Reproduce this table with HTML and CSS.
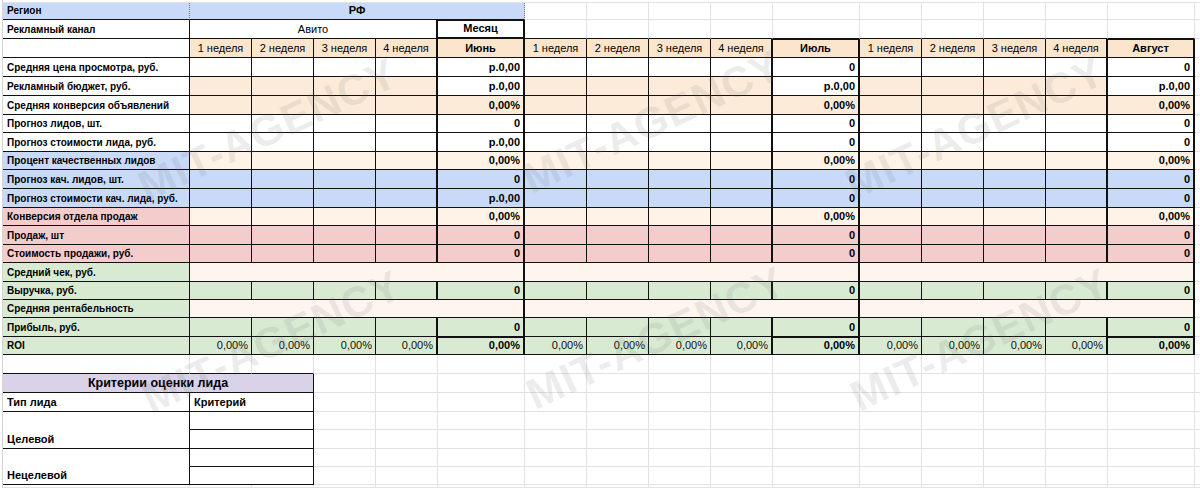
FILE: index.html
```html
<!DOCTYPE html>
<html lang="ru">
<head>
<meta charset="utf-8">
<title>Медиаплан</title>
<link rel="stylesheet" href="styles.css">
</head>
<body>
<div class="page">
  <div class="sheet">
    <div class="top"></div>

    <div class="row">
      <div class="c lab bl dot">Регион</div>
      <div class="c bl b ctr dot sp5">РФ</div>
      <div class="g"></div><div class="g"></div><div class="g"></div><div class="g"></div><div class="g"></div><div class="g"></div><div class="g"></div><div class="g"></div><div class="g"></div><div class="g"></div><div class="g"></div>
    </div>

    <div class="row">
      <div class="c lab">Рекламный канал</div>
      <div class="c ctr sp4 w4">Авито</div>
      <div class="c m ctr mhead">Месяц</div>
      <div class="gk"></div><div class="gk"></div><div class="gk"></div><div class="gk"></div><div class="gk"></div><div class="gk"></div><div class="gk"></div><div class="gk"></div><div class="gk"></div><div class="gk"></div><div class="g"></div>
    </div>

    <div class="row hdr">
      <div class="c"></div>
      <div class="c wk ctr">1 неделя</div><div class="c wk ctr">2 неделя</div><div class="c wk ctr">3 неделя</div><div class="c wk ctr w4">4 неделя</div><div class="c m ctr">Июнь</div>
      <div class="c wk ctr">1 неделя</div><div class="c wk ctr">2 неделя</div><div class="c wk ctr">3 неделя</div><div class="c wk ctr w4">4 неделя</div><div class="c m ctr mtop">Июль</div>
      <div class="c wk ctr">1 неделя</div><div class="c wk ctr">2 неделя</div><div class="c wk ctr">3 неделя</div><div class="c wk ctr w4">4 неделя</div><div class="c m ctr mtop">Август</div>
      <div class="g"></div>
    </div>

    <div class="row">
      <div class="c lab">Средняя цена просмотра, руб.</div>
      <div class="c wk"></div><div class="c wk"></div><div class="c wk"></div><div class="c wk w4"></div><div class="c m">р.0,00</div>
      <div class="c wk"></div><div class="c wk"></div><div class="c wk"></div><div class="c wk w4"></div><div class="c m">0</div>
      <div class="c wk"></div><div class="c wk"></div><div class="c wk"></div><div class="c wk w4"></div><div class="c m">0</div>
      <div class="g"></div>
    </div>

    <div class="row r-budget">
      <div class="c lab">Рекламный бюджет, руб.</div>
      <div class="c wk"></div><div class="c wk"></div><div class="c wk"></div><div class="c wk w4"></div><div class="c m">р.0,00</div>
      <div class="c wk"></div><div class="c wk"></div><div class="c wk"></div><div class="c wk w4"></div><div class="c m">р.0,00</div>
      <div class="c wk"></div><div class="c wk"></div><div class="c wk"></div><div class="c wk w4"></div><div class="c m">р.0,00</div>
      <div class="g"></div>
    </div>

    <div class="row r-conv">
      <div class="c lab">Средняя конверсия объявлений</div>
      <div class="c wk"></div><div class="c wk"></div><div class="c wk"></div><div class="c wk w4"></div><div class="c m nb">0,00%</div>
      <div class="c wk"></div><div class="c wk"></div><div class="c wk"></div><div class="c wk w4"></div><div class="c m nb">0,00%</div>
      <div class="c wk"></div><div class="c wk"></div><div class="c wk"></div><div class="c wk w4"></div><div class="c m nb">0,00%</div>
      <div class="g"></div>
    </div>

    <div class="row">
      <div class="c lab">Прогноз лидов, шт.</div>
      <div class="c wk"></div><div class="c wk"></div><div class="c wk"></div><div class="c wk w4"></div><div class="c m">0</div>
      <div class="c wk"></div><div class="c wk"></div><div class="c wk"></div><div class="c wk w4"></div><div class="c m">0</div>
      <div class="c wk"></div><div class="c wk"></div><div class="c wk"></div><div class="c wk w4"></div><div class="c m">0</div>
      <div class="g"></div>
    </div>

    <div class="row">
      <div class="c lab">Прогноз стоимости лида, руб.</div>
      <div class="c wk"></div><div class="c wk"></div><div class="c wk"></div><div class="c wk w4"></div><div class="c m">р.0,00</div>
      <div class="c wk"></div><div class="c wk"></div><div class="c wk"></div><div class="c wk w4"></div><div class="c m">0</div>
      <div class="c wk"></div><div class="c wk"></div><div class="c wk"></div><div class="c wk w4"></div><div class="c m">0</div>
      <div class="g"></div>
    </div>

    <div class="row r-qual">
      <div class="c lab">Процент качественных лидов</div>
      <div class="c wk"></div><div class="c wk"></div><div class="c wk"></div><div class="c wk w4"></div><div class="c m">0,00%</div>
      <div class="c wk"></div><div class="c wk"></div><div class="c wk"></div><div class="c wk w4"></div><div class="c m">0,00%</div>
      <div class="c wk"></div><div class="c wk"></div><div class="c wk"></div><div class="c wk w4"></div><div class="c m">0,00%</div>
      <div class="g"></div>
    </div>

    <div class="row r-blue">
      <div class="c lab">Прогноз кач. лидов, шт.</div>
      <div class="c wk"></div><div class="c wk"></div><div class="c wk"></div><div class="c wk w4"></div><div class="c m">0</div>
      <div class="c wk"></div><div class="c wk"></div><div class="c wk"></div><div class="c wk w4"></div><div class="c m">0</div>
      <div class="c wk"></div><div class="c wk"></div><div class="c wk"></div><div class="c wk w4"></div><div class="c m">0</div>
      <div class="g"></div>
    </div>

    <div class="row r-blue">
      <div class="c lab">Прогноз стоимости кач. лида, руб.</div>
      <div class="c wk"></div><div class="c wk"></div><div class="c wk"></div><div class="c wk w4"></div><div class="c m">р.0,00</div>
      <div class="c wk"></div><div class="c wk"></div><div class="c wk"></div><div class="c wk w4"></div><div class="c m">0</div>
      <div class="c wk"></div><div class="c wk"></div><div class="c wk"></div><div class="c wk w4"></div><div class="c m">0</div>
      <div class="g"></div>
    </div>

    <div class="row r-sconv">
      <div class="c lab">Конверсия отдела продаж</div>
      <div class="c wk"></div><div class="c wk"></div><div class="c wk"></div><div class="c wk w4"></div><div class="c m">0,00%</div>
      <div class="c wk"></div><div class="c wk"></div><div class="c wk"></div><div class="c wk w4"></div><div class="c m">0,00%</div>
      <div class="c wk"></div><div class="c wk"></div><div class="c wk"></div><div class="c wk w4"></div><div class="c m">0,00%</div>
      <div class="g"></div>
    </div>

    <div class="row r-pink">
      <div class="c lab">Продаж, шт</div>
      <div class="c wk"></div><div class="c wk"></div><div class="c wk"></div><div class="c wk w4"></div><div class="c m">0</div>
      <div class="c wk"></div><div class="c wk"></div><div class="c wk"></div><div class="c wk w4"></div><div class="c m">0</div>
      <div class="c wk"></div><div class="c wk"></div><div class="c wk"></div><div class="c wk w4"></div><div class="c m">0</div>
      <div class="g"></div>
    </div>

    <div class="row r-pink">
      <div class="c lab">Стоимость продажи, руб.</div>
      <div class="c wk"></div><div class="c wk"></div><div class="c wk"></div><div class="c wk w4"></div><div class="c m">0</div>
      <div class="c wk"></div><div class="c wk"></div><div class="c wk"></div><div class="c wk w4"></div><div class="c m">0</div>
      <div class="c wk"></div><div class="c wk"></div><div class="c wk"></div><div class="c wk w4"></div><div class="c m">0</div>
      <div class="g"></div>
    </div>

    <div class="row r-merge">
      <div class="c lab">Средний чек, руб.</div>
      <div class="c mg sp5"></div><div class="c mg sp5"></div><div class="c mg sp5"></div>
      <div class="g"></div>
    </div>

    <div class="row r-green">
      <div class="c lab">Выручка, руб.</div>
      <div class="c wk"></div><div class="c wk"></div><div class="c wk"></div><div class="c wk w4"></div><div class="c m">0</div>
      <div class="c wk"></div><div class="c wk"></div><div class="c wk"></div><div class="c wk w4"></div><div class="c m">0</div>
      <div class="c wk"></div><div class="c wk"></div><div class="c wk"></div><div class="c wk w4"></div><div class="c m">0</div>
      <div class="g"></div>
    </div>

    <div class="row r-merge">
      <div class="c lab">Средняя рентабельность</div>
      <div class="c mg sp5"></div><div class="c mg sp5"></div><div class="c mg sp5"></div>
      <div class="g"></div>
    </div>

    <div class="row r-green">
      <div class="c lab">Прибыль, руб.</div>
      <div class="c wk"></div><div class="c wk"></div><div class="c wk"></div><div class="c wk w4"></div><div class="c m">0</div>
      <div class="c wk"></div><div class="c wk"></div><div class="c wk"></div><div class="c wk w4"></div><div class="c m">0</div>
      <div class="c wk"></div><div class="c wk"></div><div class="c wk"></div><div class="c wk w4"></div><div class="c m">0</div>
      <div class="g"></div>
    </div>

    <div class="row r-green r-roi">
      <div class="c lab">ROI</div>
      <div class="c wk num">0,00%</div><div class="c wk num">0,00%</div><div class="c wk num">0,00%</div><div class="c wk num w4">0,00%</div><div class="c m">0,00%</div>
      <div class="c wk num">0,00%</div><div class="c wk num">0,00%</div><div class="c wk num">0,00%</div><div class="c wk num w4">0,00%</div><div class="c m">0,00%</div>
      <div class="c wk num">0,00%</div><div class="c wk num">0,00%</div><div class="c wk num">0,00%</div><div class="c wk num w4">0,00%</div><div class="c m">0,00%</div>
      <div class="g"></div>
    </div>

    <!-- empty row -->
    <div class="row">
      <div class="gk"></div><div class="gk"></div><div class="gk"></div>
      <div class="g"></div><div class="g"></div><div class="g"></div><div class="g"></div><div class="g"></div><div class="g"></div><div class="g"></div><div class="g"></div><div class="g"></div><div class="g"></div><div class="g"></div><div class="g"></div><div class="g"></div><div class="g"></div>
    </div>

    <!-- criteria table -->
    <div class="row">
      <div class="c crit-h sp3">Критерии оценки лида</div>
      <div class="g"></div><div class="g"></div><div class="g"></div><div class="g"></div><div class="g"></div><div class="g"></div><div class="g"></div><div class="g"></div><div class="g"></div><div class="g"></div><div class="g"></div><div class="g"></div><div class="g"></div><div class="g"></div>
    </div>
    <div class="row">
      <div class="c cl">Тип лида</div>
      <div class="c cl sp2">Критерий</div>
      <div class="g"></div><div class="g"></div><div class="g"></div><div class="g"></div><div class="g"></div><div class="g"></div><div class="g"></div><div class="g"></div><div class="g"></div><div class="g"></div><div class="g"></div><div class="g"></div><div class="g"></div><div class="g"></div>
    </div>
    <div class="row">
      <div class="c cl rs2">Целевой</div>
      <div class="c sp2"></div>
      <div class="g"></div><div class="g"></div><div class="g"></div><div class="g"></div><div class="g"></div><div class="g"></div><div class="g"></div><div class="g"></div><div class="g"></div><div class="g"></div><div class="g"></div><div class="g"></div><div class="g"></div><div class="g"></div>
    </div>
    <div class="row">
      <div class="c sp2"></div>
      <div class="g"></div><div class="g"></div><div class="g"></div><div class="g"></div><div class="g"></div><div class="g"></div><div class="g"></div><div class="g"></div><div class="g"></div><div class="g"></div><div class="g"></div><div class="g"></div><div class="g"></div><div class="g"></div>
    </div>
    <div class="row">
      <div class="c cl rs2">Нецелевой</div>
      <div class="c sp2"></div>
      <div class="g"></div><div class="g"></div><div class="g"></div><div class="g"></div><div class="g"></div><div class="g"></div><div class="g"></div><div class="g"></div><div class="g"></div><div class="g"></div><div class="g"></div><div class="g"></div><div class="g"></div><div class="g"></div>
    </div>
    <div class="row">
      <div class="c sp2"></div>
      <div class="g"></div><div class="g"></div><div class="g"></div><div class="g"></div><div class="g"></div><div class="g"></div><div class="g"></div><div class="g"></div><div class="g"></div><div class="g"></div><div class="g"></div><div class="g"></div><div class="g"></div><div class="g"></div>
    </div>
    <div class="row">
      <div class="g"></div><div class="g"></div><div class="g"></div><div class="g"></div><div class="g"></div><div class="g"></div><div class="g"></div><div class="g"></div><div class="g"></div><div class="g"></div><div class="g"></div><div class="g"></div><div class="g"></div><div class="g"></div><div class="g"></div><div class="g"></div><div class="g"></div>
    </div>
  </div>

  <div class="wm wm1">MIT-AGENCY</div>
  <div class="wm wm2">MIT-AGENCY</div>
  <div class="wm wm3">MIT-AGENCY</div>
  <div class="wm wm4">MIT-AGENCY</div>
  <div class="wm wm5">MIT-AGENCY</div>
  <div class="wm wm6">MIT-AGENCY</div>
</div>
</body>
</html>
```

FILE: styles.css
```css
* { box-sizing: border-box; }

body {
  margin: 0;
  background: #fff;
  font-family: "Liberation Sans", Arial, sans-serif;
  font-size: 11px;
  color: #000;
  overflow: hidden;
}

.page {
  position: relative;
  width: 1200px;
  height: 488px;
  overflow: hidden;
}

.sheet {
  display: grid;
  grid-template-columns: 187px repeat(3, 62px 62px 62px 62px 87px) 1fr;
  grid-template-rows:
    3px 17px
    19px 19px 19px 19px 19px 18px 19px 18px 19px
    19px 18px 19px 18px 19px 18px 18px 19px 18px
    19px 19px 19px 18px 19px 18px 18px 1fr;
  height: 488px;
  margin-left: 2px;
  border-left: 1px solid #d4d4d4;
}

.row { display: contents; }

.top {
  grid-column: 1 / -1;
  border-bottom: 1px solid #e2e2e2;
}

.c, .g, .gk {
  display: flex;
  align-items: flex-end;
  padding: 0 3px 2px;
  line-height: 13px;
  white-space: nowrap;
  overflow: hidden;
}

.c { border-right: 1px solid #111; border-bottom: 1px solid #111; }
.g { border-right: 1px solid #e2e2e2; border-bottom: 1px solid #e2e2e2; }
.gk { border-right: 1px solid #e2e2e2; border-bottom: 1px solid #111; }

.sp2 { grid-column: span 2; }
.sp3 { grid-column: span 3; }
.sp4 { grid-column: span 4; }
.sp5 { grid-column: span 5; }
.rs2 { grid-row: span 2; }

.w4, .m, .mg { border-right-width: 2px; }

.lab { font-weight: bold; font-size: 10px; padding-left: 4px; }
.cl { font-weight: bold; padding-left: 4px; }
.b { font-weight: bold; }
.ctr { justify-content: center; }
.m { font-weight: bold; justify-content: flex-end; }
.m.ctr { justify-content: center; }
.num { justify-content: flex-end; color: #111; }

.dot { border-right: 1px dotted #777; }

.mhead { box-shadow: inset 0 1px 0 #111; border-bottom-width: 2px; }
.mtop { box-shadow: inset 0 1px 0 #111; }

/* colours */
.bl { background: #c9daf8; }
.hdr .wk, .hdr .m { background: #fce5cd; }

.r-budget .wk { background: #fdebd9; }
.r-conv .wk, .r-conv .m { background: #fdebd9; }

.r-qual .lab { background: #c9daf8; }
.r-qual .wk, .r-qual .m { background: #fef3e6; }

.r-blue .lab, .r-blue .wk, .r-blue .m { background: #c9daf8; }

.r-sconv .lab { background: #f4cccc; }
.r-sconv .wk, .r-sconv .m { background: #fef3e6; }

.r-pink .lab, .r-pink .wk, .r-pink .m { background: #f4cccc; }

.r-merge .lab { background: #d9ead3; }
.r-merge .mg { background: #fdf5ee; }

.r-green .lab, .r-green .wk, .r-green .m { background: #d9ead3; }

.r-roi .m { box-shadow: inset 0 1px 0 #111; }

.crit-h {
  background: #d9d2e9;
  font-weight: bold;
  font-size: 12.5px;
  line-height: 15px;
  justify-content: center;
  padding-bottom: 1px;
}

/* watermark */
.wm {
  position: absolute;
  font-family: "Liberation Sans", Arial, sans-serif;
  font-weight: bold;
  font-size: 43px;
  letter-spacing: 1px;
  color: rgba(110, 110, 110, 0.13);
  white-space: nowrap;
  pointer-events: none;
  transform: translate(-50%, -50%) rotate(-25deg);
}
.wm1 { left: 268px; top: 130px; }
.wm2 { left: 652px; top: 122px; }
.wm3 { left: 975px; top: 128px; }
.wm4 { left: 272px; top: 342px; }
.wm5 { left: 656px; top: 338px; }
.wm6 { left: 980px; top: 340px; }
```
